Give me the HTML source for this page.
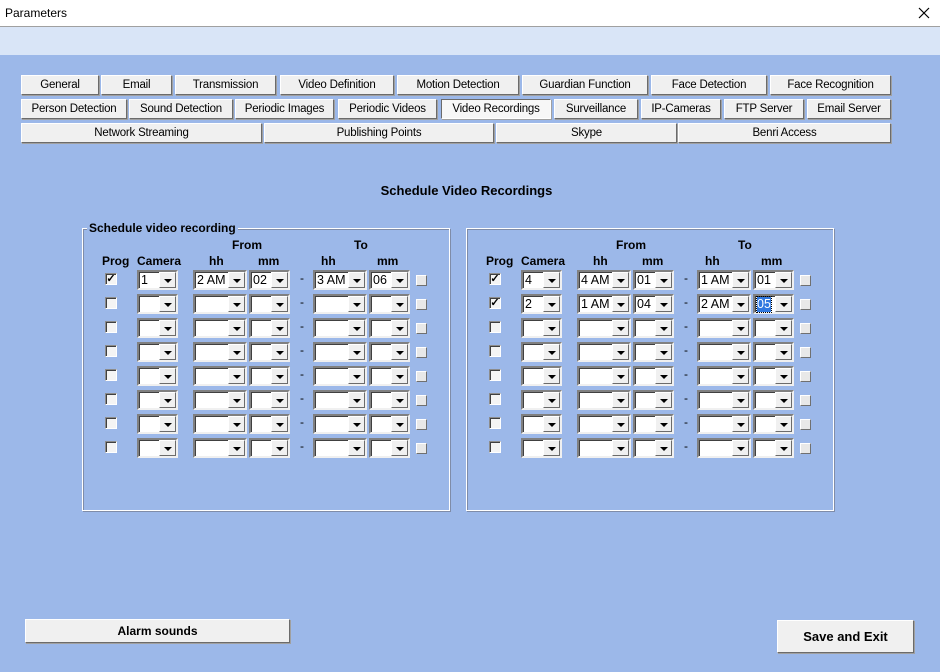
<!DOCTYPE html>
<html><head><meta charset="utf-8"><style>
*{box-sizing:border-box}
body{margin:0;width:940px;height:672px;overflow:hidden;background:#9cb8e9;font-family:"Liberation Sans",sans-serif;font-size:12px;position:relative;color:#000}
.abs{position:absolute}
.title{left:0;top:0;width:940px;height:27px;background:#fff;border-bottom:1px solid #a0a0a0}
.band{left:0;top:27px;width:940px;height:28px;background:#d9e5f7}
.btn{position:absolute;background:#f0f0f0;border:1px solid;border-color:#fff #6b6b6b #6b6b6b #fff;box-shadow:1px 1px 0 #a0a0a0;text-align:center;font-size:11.5px;letter-spacing:-0.2px;line-height:18px;white-space:nowrap}
.sel{background:#f7f7f7;border-color:#6b6b6b #fff #fff #6b6b6b}
.grp{position:absolute;border:1px solid #fff;box-shadow:inset 1px 1px 0 #7f8ca8, 1px 1px 0 #7f8ca8}
.lbl{position:absolute;font-weight:bold;font-size:12px}
.cb{position:absolute;width:12px;height:12px;background:#f4f4f4;border:1px solid;border-color:#8c8c8c #fff #fff #8c8c8c;box-shadow:inset 1px 1px 0 #404040;font-size:11px;line-height:10px;text-align:center;font-weight:bold}
.combo{position:absolute;height:20px;background:#fff;border:2px solid;border-color:#808080 #f0f0f0 #f0f0f0 #808080;box-shadow:inset 1px 1px 0 #404040}
.combo .v{position:absolute;left:2px;top:1px;font-size:12.5px;line-height:15px}
.combo .dd{position:absolute;right:0;top:0;width:17px;height:16px;background:#f0f0f0;border:1px solid;border-color:#fff #6b6b6b #6b6b6b #fff}
.combo .dd:after{content:"";position:absolute;left:4px;top:6px;border-left:4px solid transparent;border-right:4px solid transparent;border-top:4px solid #000}
.sq{position:absolute;width:11px;height:11px;background:#e8e8e8;border:1px solid;border-color:#fff #707070 #707070 #fff}
.dash{position:absolute;font-size:12px}
</style></head><body>
<div class="abs title"><span class="abs" style="left:5px;top:6px;font-size:12px">Parameters</span>
<svg class="abs" style="left:918px;top:7px" width="12" height="12"><path d="M1 1L11 11M11 1L1 11" stroke="#000" stroke-width="1.2"/></svg></div>
<div class="abs band"></div>
<div id="tabs"></div>
<div class="abs" style="left:0;top:183px;width:933px;text-align:center;font-weight:bold;font-size:13px">Schedule Video Recordings</div>
<div class="grp" style="left:82px;top:228px;width:368px;height:283px"></div>
<div class="grp" style="left:466px;top:228px;width:368px;height:283px"></div>
<div class="lbl" style="left:87px;top:221px;background:#9cb8e9;padding:0 2px">Schedule video recording</div>
<div id="g"></div>
<div class="btn" style="left:25px;top:619px;width:265px;height:24px;line-height:22px;font-weight:bold;font-size:12px;letter-spacing:0">Alarm sounds</div>
<div class="btn" style="left:777px;top:620px;width:137px;height:33px;line-height:31px;font-weight:bold;font-size:13px;letter-spacing:0">Save and Exit</div>
<script>
var T=[[75,[["General",21,99],["Email",101,172],["Transmission",175,276],["Video Definition",280,394],["Motion Detection",397,519],["Guardian Function",522,648],["Face Detection",651,767],["Face Recognition",770,891]]],
[99,[["Person Detection",21,127],["Sound Detection",129,233],["Periodic Images",235,334],["Periodic Videos",338,437],["Video Recordings",441,551,1],["Surveillance",554,638],["IP-Cameras",641,721],["FTP Server",724,804],["Email Server",807,891]]],
[123,[["Network Streaming",21,262],["Publishing Points",264,494],["Skype",496,677],["Benri Access",678,891]]]];
var h="";T.forEach(function(r){r[1].forEach(function(b){h+='<div class="btn'+(b[3]?' sel':'')+'" style="left:'+b[1]+'px;top:'+r[0]+'px;width:'+(b[2]-b[1])+'px;height:20px">'+b[0]+'</div>'})});
document.getElementById("tabs").innerHTML=h;
function combo(x,y,w,v,hl){return '<div class="combo" style="left:'+x+'px;top:'+y+'px;width:'+w+'px"><span class="v"'+(hl?' style="background:#3078e0;color:#fff;outline:1px dotted #000"':'')+'>'+(v||'')+'</span><div class="dd"></div></div>'}
var L=[["1","2 AM","02","3 AM","06",1]],R=[["4","4 AM","01","1 AM","01",1],["2","1 AM","04","2 AM","05",1,1]];
var g="";[[0,L],[384,R]].forEach(function(s){var o=s[0],d=s[1];
g+='<div class="lbl" style="left:'+(o+200)+'px;top:238px;width:94px;text-align:center">From</div>';
g+='<div class="lbl" style="left:'+(o+354)+'px;top:238px">To</div>';
[["Prog",102],["Camera",137],["hh",209],["mm",258],["hh",321],["mm",377]].forEach(function(a){g+='<div class="lbl" style="left:'+(o+a[1])+'px;top:254px">'+a[0]+'</div>'});
for(var i=0;i<8;i++){var y=270+i*24,r=d[i]||[];
g+='<div class="cb" style="left:'+(o+105)+'px;top:'+(y+3)+'px">'+(r[5]?'&#10003;':'')+'</div>';
g+=combo(o+137,y,41,r[0])+combo(o+193,y,54,r[1])+combo(o+249,y,41,r[2]);
g+='<div class="dash" style="left:'+(o+300)+'px;top:'+(y+1)+'px">-</div>';
g+=combo(o+313,y,54,r[3])+combo(o+369,y,41,r[4],r[6]);
g+='<div class="sq" style="left:'+(o+416)+'px;top:'+(y+5)+'px"></div>';}
});
document.getElementById("g").innerHTML=g;
</script>
</body></html>
